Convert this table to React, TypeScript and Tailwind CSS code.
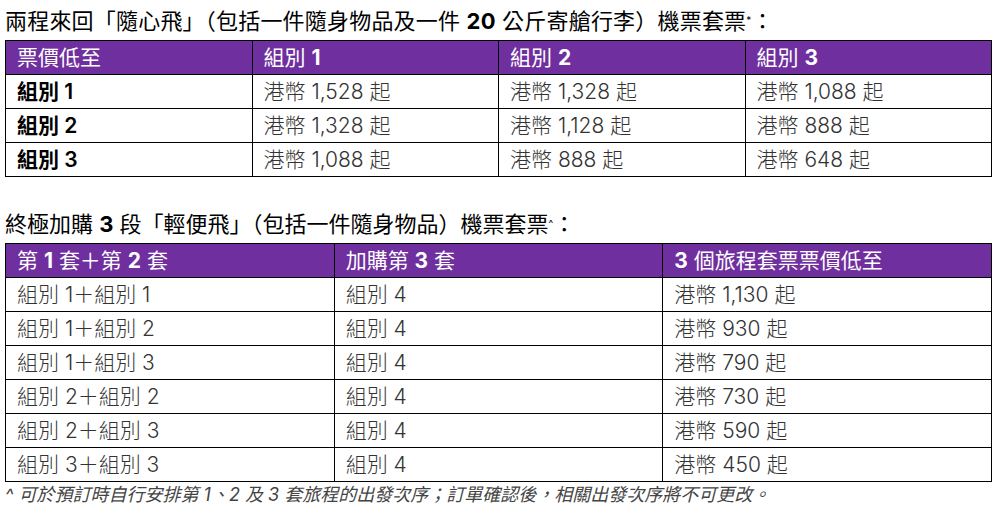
import type { ReactNode } from "react";

const font = {
  fontFamily: '"Inter", "Noto Sans CJK TC", "Noto Sans", sans-serif',
};

const B = ({ children }: { children: ReactNode }) => (
  <span className="font-bold">{children}</span>
);

const Th = ({ children }: { children: ReactNode }) => (
  <th className="border border-black bg-[#702f9e] text-white font-normal text-left px-[11px] h-[34px] text-[21px] leading-none">
    {children}
  </th>
);

const Td = ({ children, bold }: { children: ReactNode; bold?: boolean }) => (
  <td
    className={
      "border border-black px-[11px] h-[34px] text-[21px] leading-none text-left " +
      (bold ? "font-semibold text-black" : "text-[#333] font-light")
    }
  >
    {children}
  </td>
);

const table1 = [
  ["組別 1", "港幣 1,528 起", "港幣 1,328 起", "港幣 1,088 起"],
  ["組別 2", "港幣 1,328 起", "港幣 1,128 起", "港幣 888 起"],
  ["組別 3", "港幣 1,088 起", "港幣 888 起", "港幣 648 起"],
];

const table2 = [
  ["組別 1＋組別 1", "組別 4", "港幣 1,130 起"],
  ["組別 1＋組別 2", "組別 4", "港幣 930 起"],
  ["組別 1＋組別 3", "組別 4", "港幣 790 起"],
  ["組別 2＋組別 2", "組別 4", "港幣 730 起"],
  ["組別 2＋組別 3", "組別 4", "港幣 590 起"],
  ["組別 3＋組別 3", "組別 4", "港幣 450 起"],
];

export default function App() {
  return (
    <div className="w-[1004px] h-[517px] bg-white pl-[5px] pt-[8px]" style={font}>
      <h2 className="text-[22px] leading-[26px] text-black font-normal h-[32px] whitespace-nowrap tracking-[0.2px]">
        兩程來回「隨心飛」（包括一件隨身物品及一件 <B>20</B> 公斤寄艙行李）機票套票
        <sup className="text-[10px]">*</sup>：
      </h2>
      <table className="border-collapse w-[987px] table-fixed">
        <thead>
          <tr>
            <Th>票價低至</Th>
            <Th>
              組別 <B>1</B>
            </Th>
            <Th>
              組別 <B>2</B>
            </Th>
            <Th>
              組別 <B>3</B>
            </Th>
          </tr>
        </thead>
        <tbody>
          {table1.map((row) => (
            <tr key={row[0]}>
              {row.map((c, i) => (
                <Td key={i} bold={i === 0}>
                  {c}
                </Td>
              ))}
            </tr>
          ))}
        </tbody>
      </table>

      <h2 className="text-[22px] leading-[26px] text-black font-normal mt-[34px] h-[32px] whitespace-nowrap">
        終極加購 <B>3</B> 段「輕便飛」（包括一件隨身物品）機票套票
        <sup className="text-[10px]">^</sup>：
      </h2>
      <table className="border-collapse w-[987px] table-fixed">
        <thead>
          <tr>
            <Th>
              第 <B>1</B> 套＋第 <B>2</B> 套
            </Th>
            <Th>
              加購第 <B>3</B> 套
            </Th>
            <Th>
              <B>3</B> 個旅程套票票價低至
            </Th>
          </tr>
        </thead>
        <tbody>
          {table2.map((row) => (
            <tr key={row[0]}>
              {row.map((c, i) => (
                <Td key={i}>{c}</Td>
              ))}
            </tr>
          ))}
        </tbody>
      </table>
      <p className="text-[18px] italic text-[#444] mt-[3px] leading-[20px] whitespace-nowrap">
        ^ 可於預訂時自行安排第 1、2 及 3 套旅程的出發次序；訂單確認後，相關出發次序將不可更改。
      </p>
    </div>
  );
}
